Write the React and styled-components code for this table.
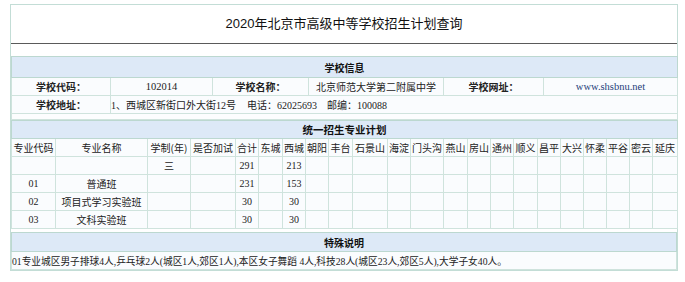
import React from 'react';
import styled, { createGlobalStyle } from 'styled-components';

const Global = createGlobalStyle`
  html, body { margin: 0; padding: 0; background: #fff; }
  body { font-family: "Liberation Serif", "Noto Sans CJK SC", serif; color: #222; }
`;

const Frame = styled.div`
  margin: 4px 0 0 10px;
  width: 666px;
  border: 1px solid #c3ddd6;
  background: #fff;
`;

const Title = styled.h1`
  margin: 0;
  height: 38px;
  line-height: 38px;
  text-align: center;
  font-family: "Liberation Sans", "Noto Sans CJK SC", sans-serif;
  font-size: 13px;
  font-weight: normal;
  color: #111;
  border-bottom: 1px solid #5a5a5a;
`;

const Gap = styled.div`
  height: ${p => p.$h}px;
`;

const Table = styled.table`
  width: 666px;
  border-collapse: collapse;
  table-layout: fixed;
  font-size: 10px;
  color: #222;
`;

const Band = styled.td`
  height: ${p => p.$h || 19}px;
  padding: 0;
  background: #dde9f7;
  border: 1px solid #bcd8d0;
  text-align: center;
  font-family: "Noto Sans CJK SC", sans-serif;
  font-weight: bold;
  font-size: ${p => p.$fs || 10}px;
  color: #111;
`;

const Cell = styled.td`
  height: ${p => p.$h || 17}px;
  padding: 0;
  background: #fafcfe;
  border: 1px solid #cfe3dd;
  text-align: ${p => p.$left ? 'left' : 'center'};
  white-space: nowrap;
  overflow: hidden;
  font-weight: ${p => p.$bold ? 'bold' : 'normal'};
  font-family: ${p => p.$sans ? '"Noto Sans CJK SC", sans-serif' : '"Liberation Serif", "Noto Sans CJK SC", serif'};
  font-size: ${p => p.$fs || 10}px;
  color: ${p => p.$link ? '#24407a' : '#222'};
`;

const Spacer = styled.td`
  height: 5px;
  padding: 0;
  background: #fcfdfe;
  border: 1px solid #cfe3dd;
`;

const Sep = styled.span`
  display: inline-block;
  width: ${p => p.$w}px;
`;

const infoCols = [99, 102, 96, 135, 100, 134];
const planCols = [44, 92, 43, 45, 23, 24, 23, 23, 24, 35, 23, 33, 24, 23, 23, 24, 23, 23, 23, 23, 23, 25];
const districts = ['合计', '东城', '西城', '朝阳', '丰台', '石景山', '海淀', '门头沟', '燕山', '房山', '通州', '顺义', '昌平', '大兴', '怀柔', '平谷', '密云', '延庆'];

const rows = [
  { code: '', name: '', years: '三', total: '291', xc: '213' },
  { code: '01', name: '普通班', years: '', total: '231', xc: '153' },
  { code: '02', name: '项目式学习实验班', years: '', total: '30', xc: '30' },
  { code: '03', name: '文科实验班', years: '', total: '30', xc: '30' },
];

function Cols({ widths }) {
  return (
    <colgroup>
      {widths.map((w, i) => <col key={i} style={{ width: w }} />)}
    </colgroup>
  );
}

export default function App() {
  return (
    <>
      <Global />
      <Frame>
        <Title>2020年北京市高级中等学校招生计划查询</Title>
        <Gap $h={12} />
        <Table>
          <Cols widths={infoCols} />
          <tbody>
            <tr><Band colSpan={6} $h={20}>学校信息</Band></tr>
            <tr>
              <Cell $bold $sans>学校代码：</Cell>
              <Cell $fs={10.5}>102014</Cell>
              <Cell $bold $sans>学校名称：</Cell>
              <Cell $sans>北京师范大学第二附属中学</Cell>
              <Cell $bold $sans>学校网址：</Cell>
              <Cell $link $fs={10.5}>www.shsbnu.net</Cell>
            </tr>
            <tr>
              <Cell $bold $sans>学校地址：</Cell>
              <Cell colSpan={5} $left>
                1、西城区新街口外大街12号<Sep $w={11} />电话：62025693<Sep $w={10} />邮编：100088
              </Cell>
            </tr>
            <tr><Spacer colSpan={6} /></tr>
          </tbody>
        </Table>
        <Table>
          <Cols widths={planCols} />
          <tbody>
            <tr><Band colSpan={22} $h={17} $fs={10.5}>统一招生专业计划</Band></tr>
            <tr>
              <Cell $sans>专业代码</Cell>
              <Cell $sans>专业名称</Cell>
              <Cell $sans>学制(年)</Cell>
              <Cell $sans>是否加试</Cell>
              {districts.map(d => <Cell key={d} $sans>{d}</Cell>)}
            </tr>
            {rows.map((r, i) => (
              <tr key={i}>
                <Cell>{r.code}</Cell>
                <Cell $sans>{r.name}</Cell>
                <Cell $sans>{r.years}</Cell>
                <Cell />
                <Cell>{r.total}</Cell>
                <Cell />
                <Cell>{r.xc}</Cell>
                {districts.slice(3).map(d => <Cell key={d} />)}
              </tr>
            ))}
          </tbody>
        </Table>
        <Gap $h={3} />
        <Table>
          <tbody>
            <tr><Band $h={18}>特殊说明</Band></tr>
            <tr>
              <Cell $left $fs={9.7}>01专业城区男子排球4人,乒乓球2人(城区1人,郊区1人),本区女子舞蹈 4人,科技28人(城区23人,郊区5人),大学子女40人。</Cell>
            </tr>
          </tbody>
        </Table>
      </Frame>
    </>
  );
}
